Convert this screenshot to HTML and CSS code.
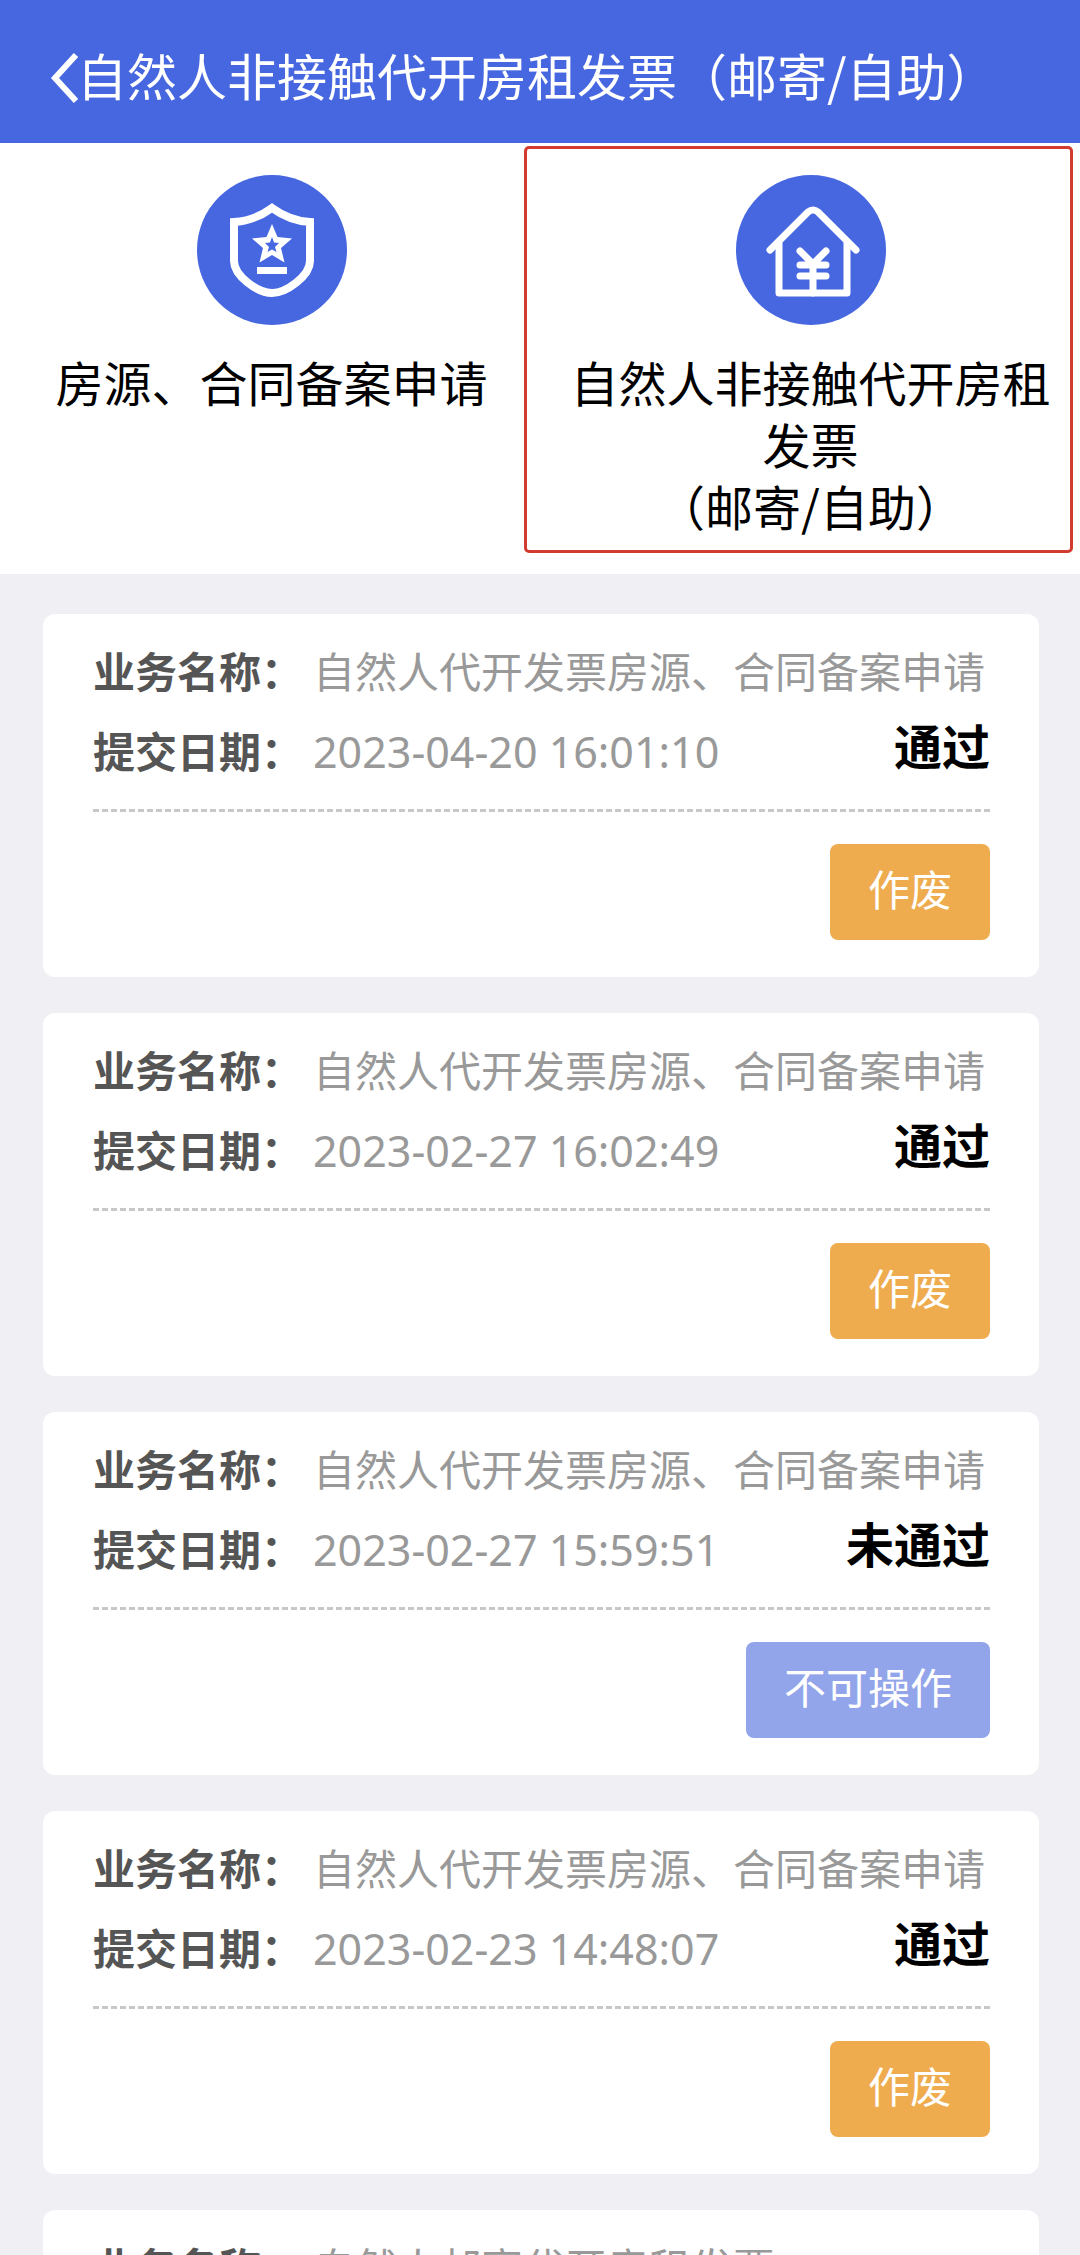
FILE: index.html
```html
<!DOCTYPE html>
<html lang="zh-CN">

<head>
    <meta charset="UTF-8">
    <meta name="viewport" content="width=device-width, initial-scale=1.0">
    <title>自然人非接触代开房租发票</title>
    <link rel="stylesheet" href="styles.css">
</head>

<body>
    <header class="header">
        <a class="back" href="#" aria-label="返回">
            <svg width="32" height="52" viewBox="0 0 32 52">
                <path d="M28 3 L7 26 L28 49" fill="none" stroke="#fff" stroke-width="6" />
            </svg>
        </a>
        <h1>自然人非接触代开房租发票（邮寄/自助）</h1>
    </header>

    <nav class="menu">
        <a class="menu-item" href="#">
            <svg class="menu-icon" viewBox="0 0 150 150">
                <circle cx="75" cy="75" r="75" fill="#4767e1" />
                <path d="M75 33 Q57 46 37 47 V86 C37 101 61 118 75 118 C89 118 113 101 113 86 V47 Q93 46 75 33 Z" fill="none" stroke="#fff" stroke-width="8" />
                <path d="M75 49 L80.5 62 L95 63.5 L84 73 L87.5 87.5 L75 80 L62.5 87.5 L66 73 L55 63.5 L69.5 62 Z" fill="#fff" />
                <path d="M75 62 L77 67.5 L82 68 L78 72 L79.5 77 L75 74.5 L70.5 77 L72 72 L68 68 L73 67.5 Z" fill="#4767e1" />
                <rect x="60" y="92" width="30" height="7" fill="#fff" />
            </svg>
            <span>房源、合同备案申请</span>
        </a>
        <a class="menu-item active" href="#">
            <svg class="menu-icon" viewBox="0 0 150 150">
                <circle cx="75" cy="75" r="75" fill="#4767e1" />
                <g fill="none" stroke="#fff" stroke-width="7" stroke-linecap="round" stroke-linejoin="round">
                    <path d="M34 75 L72 37 Q77 33 82 37 L120 75" />
                    <path d="M43 68 V118 H111 V68" />
                    <path d="M64 76 L77 89 L90 76 M64 90 H90 M64 101 H90 M77 89 V118" />
                </g>
            </svg>
            <span>自然人非接触代开房租发票</span>
            <span>（邮寄/自助）</span>
        </a>
    </nav>

    <main class="list">
        <section class="card">
            <dl class="info">
                <div class="row">
                    <dt>业务名称：</dt>
                    <dd>自然人代开发票房源、合同备案申请</dd>
                </div>
                <div class="row">
                    <dt>提交日期：</dt>
                    <dd class="date">2023-04-20 16:01:10</dd>
                    <dd class="status">通过</dd>
                </div>
            </dl>
            <div class="actions">
                <button class="btn btn-cancel">作废</button>
            </div>
        </section>

        <section class="card">
            <dl class="info">
                <div class="row">
                    <dt>业务名称：</dt>
                    <dd>自然人代开发票房源、合同备案申请</dd>
                </div>
                <div class="row">
                    <dt>提交日期：</dt>
                    <dd class="date">2023-02-27 16:02:49</dd>
                    <dd class="status">通过</dd>
                </div>
            </dl>
            <div class="actions">
                <button class="btn btn-cancel">作废</button>
            </div>
        </section>

        <section class="card">
            <dl class="info">
                <div class="row">
                    <dt>业务名称：</dt>
                    <dd>自然人代开发票房源、合同备案申请</dd>
                </div>
                <div class="row">
                    <dt>提交日期：</dt>
                    <dd class="date">2023-02-27 15:59:51</dd>
                    <dd class="status">未通过</dd>
                </div>
            </dl>
            <div class="actions">
                <button class="btn" disabled>不可操作</button>
            </div>
        </section>

        <section class="card">
            <dl class="info">
                <div class="row">
                    <dt>业务名称：</dt>
                    <dd>自然人代开发票房源、合同备案申请</dd>
                </div>
                <div class="row">
                    <dt>提交日期：</dt>
                    <dd class="date">2023-02-23 14:48:07</dd>
                    <dd class="status">通过</dd>
                </div>
            </dl>
            <div class="actions">
                <button class="btn btn-cancel">作废</button>
            </div>
        </section>

        <section class="card">
            <dl class="info">
                <div class="row">
                    <dt>业务名称：</dt>
                    <dd>自然人邮寄代开房租发票</dd>
                </div>
            </dl>
        </section>
    </main>
</body>

</html>
```

FILE: styles.css
```css
* {
    box-sizing: border-box;
}

body {
    margin: 0;
    height: 100vh;
    display: flex;
    flex-direction: column;
    background-color: #efeff4;
    font-family: "Noto Sans CJK SC", sans-serif;
    font-size: 42px;
    color: #000;
}

a {
    color: inherit;
    text-decoration: none;
}

/* 顶部标题栏 */
.header {
    flex: none;
    display: flex;
    align-items: center;
    padding: 39px 48px 34px;
    background-color: #4767e1;
    color: #fff;
}

.back {
    display: flex;
    margin-right: -3px;
    padding-top: 8px;
}

.header h1 {
    margin: 0;
    font-size: 50px;
    font-weight: 400;
    line-height: 70px;
    white-space: nowrap;
}

/* 功能入口 */
.menu {
    flex: none;
    display: flex;
    padding-left: 2px;
    background-color: #fff;
}

.menu-item {
    flex: 1;
    position: relative;
    display: flex;
    flex-direction: column;
    align-items: center;
    padding: 32px 20px 38px;
    font-size: 48px;
    line-height: 62px;
    text-align: center;
}

.menu-icon {
    width: 150px;
    height: 150px;
    margin-bottom: 25px;
}

.menu-item.active::after {
    content: "";
    position: absolute;
    top: 3px;
    right: 7px;
    bottom: 21px;
    left: -17px;
    border: 3px solid #d23c30;
    border-radius: 5px;
}

/* 申请记录 */
.list {
    flex: 1;
    min-height: 0;
    overflow-y: auto;
    scrollbar-width: none;
    display: flex;
    flex-direction: column;
    gap: 36px;
    padding: 40px 41px 40px 43px;
}

.card {
    flex: none;
    padding: 16px 49px 37px 50px;
    border-radius: 12px;
    background-color: #fff;
}

.info {
    margin: 0;
    padding-bottom: 19px;
    border-bottom: 3px dashed #c8c8c8;
}

.row {
    display: flex;
    align-items: baseline;
    height: 80px;
    line-height: 80px;
}

.row dt {
    margin-right: 10px;
    font-weight: 700;
    color: #555;
}

.row dd {
    margin: 0;
    color: #999;
}

.row .date {
    font-family: "Noto Sans", "Noto Sans CJK SC", sans-serif;
    font-size: 43px;
}

.row .status {
    align-self: flex-start;
    margin-left: auto;
    font-size: 48px;
    font-weight: 700;
    line-height: 68px;
    color: #000;
}

.actions {
    display: flex;
    justify-content: flex-end;
    padding-top: 32px;
}

.btn {
    height: 96px;
    padding: 0 38px 10px;
    border: none;
    border-radius: 8px;
    background-color: #4767e1;
    color: #fff;
    font-family: inherit;
    font-size: 42px;
    cursor: pointer;
}

.btn-cancel {
    background-color: #eeac4f;
}

.btn:disabled {
    background-color: #93a5ea;
    cursor: default;
}
```
